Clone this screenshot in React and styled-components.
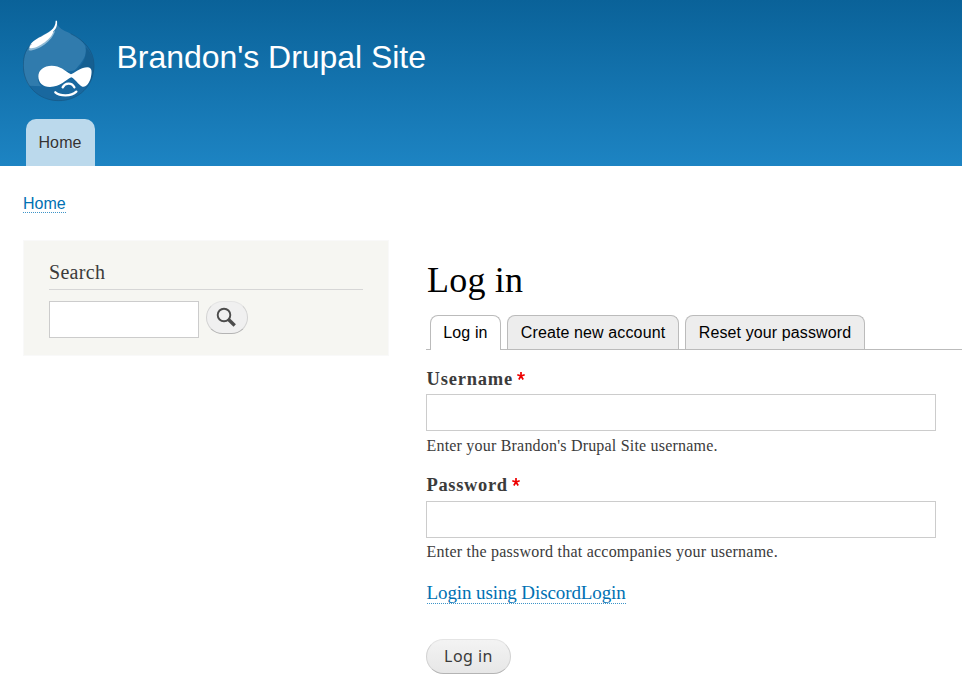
import React from 'react';
import styled, { createGlobalStyle } from 'styled-components';

const serif = '"Liberation Serif", Georgia, serif';
const sans = '"Liberation Sans", Arial, sans-serif';

const GlobalStyle = createGlobalStyle`
  *, *::before, *::after { box-sizing: border-box; }
  body {
    margin: 0;
    background: #fff;
    color: #3b3b3b;
    font-family: ${serif};
    overflow: hidden;
  }
`;

const Page = styled.div`
  width: 962px;
  height: 680px;
  overflow: hidden;
`;

const Header = styled.header`
  height: 166px;
  display: flex;
  flex-direction: column;
  justify-content: space-between;
  background: linear-gradient(to bottom, #0a6299 0%, #1d84c3 100%);
`;

const Branding = styled.div`
  display: flex;
  align-items: flex-start;
  gap: 22px;
  padding: 20px 0 0 23px;
`;

const Logo = styled.svg`
  display: block;
  width: 72px;
  height: 82px;
`;

const SiteName = styled.div`
  margin-top: 18px;
  margin-left: -0.5px;
  font: 32px/38px ${sans};
  letter-spacing: ${p => p.$tracking};
  color: #fff;
`;

const MainMenu = styled.nav`
  display: flex;
  padding-left: 26px;
`;

const MenuTab = styled.a`
  width: 69px;
  height: 47px;
  padding-left: 12.4px;
  border-radius: 10px 10px 0 0;
  background: #bbd9ec;
  color: #333;
  font: 16px/47px ${sans};
  letter-spacing: 0.15px;
  text-shadow: 0 1px #d5e8f4;
`;

const Breadcrumb = styled.nav`
  height: 74px;
  padding: 27px 0 0 23px;
  font: 16px/21px ${sans};
`;

const TextLink = styled.a`
  display: inline-block;
  height: ${p => p.$height};
  color: #0071b3;
  border-bottom: 1px dotted #3d94c8;
  letter-spacing: ${p => p.$tracking || 'normal'};
`;

const Columns = styled.div`
  display: flex;
  align-items: flex-start;
  gap: 37px;
  padding-left: 23px;
`;

const Sidebar = styled.aside`
  flex: none;
  width: 366px;
  height: 116px;
  padding: 19px 25px 0 25px;
  border: 1px solid #f9f9f9;
  background: #f6f6f2;
`;

const BlockTitle = styled.h2`
  margin: 0 0 11px;
  height: 30px;
  border-bottom: 1px solid #d6d6d6;
  font: 20px/24px ${serif};
  letter-spacing: ${p => p.$tracking};
`;

const SearchForm = styled.form`
  display: flex;
  gap: 7px;
`;

const Field = styled.input`
  display: block;
  width: ${p => p.$width};
  height: 37px;
  border: 1px solid #ccc;
  border-radius: 0;
  padding: 4px;
  background: #fff;
  outline: none;
`;

const PillButton = styled.button`
  display: flex;
  align-items: center;
  justify-content: center;
  width: ${p => p.$width};
  height: ${p => p.$height};
  margin: 0;
  padding: 0 0 2px;
  border: 1px solid;
  border-color: #e4e4e4 #d2d2d2 #b4b4b4;
  border-radius: 18px;
  background: ${p => p.$flat ? '#f0f0f0' : 'linear-gradient(#f3f3f3, #e7e7e7)'};
  color: #3a3a3a;
  font: 16px/20px "Noto Sans", "Open Sans", sans-serif;
  letter-spacing: 0.45px;
`;

const SearchIcon = styled.svg`
  display: block;
  width: 20px;
  height: 20px;
  margin-right: 2px;
`;

const Main = styled.main`
  flex: 1;
  padding-top: 18px;
`;

const PageTitle = styled.h1`
  margin: 0 0 13px 1px;
  font: 36px/44px ${serif};
  letter-spacing: ${p => p.$tracking};
  color: #000;
`;

const Tabs = styled.div`
  display: flex;
  gap: 6px;
  height: 35px;
  padding-left: 4px;
  border-bottom: 1px solid #bbb;
`;

const Tab = styled.a`
  width: ${p => p.$width};
  height: ${p => p.$active ? '35px' : '34px'};
  border: 1px solid #bbb;
  border-bottom: 0;
  border-radius: 8px 8px 0 0;
  background: ${p => p.$active ? '#fff' : '#ededed'};
  color: #000;
  font: 16px/33px ${sans};
  letter-spacing: 0.12px;
  text-align: center;
  white-space: nowrap;
`;

const LoginForm = styled.form`
  padding-top: 19px;
`;

const FormItem = styled.div`
  height: ${p => p.$height};
`;

const Label = styled.label`
  display: flex;
  gap: 4px;
  height: ${p => p.$height};
  padding-left: 0.5px;
  font: bold 18.5px/21px ${serif};
`;

const LabelText = styled.span`
  letter-spacing: ${p => p.$tracking};
`;

const Required = styled.svg`
  width: 8px;
  height: 8px;
  margin-top: 3px;
`;

const Description = styled.div`
  margin-top: ${p => p.$gap};
  padding-left: 0.5px;
  font: 16px/20px ${serif};
  letter-spacing: ${p => p.$tracking};
  white-space: nowrap;
`;

const LinkRow = styled.div`
  height: 57px;
  padding-left: 0.5px;
  font: 19px/22px ${serif};
`;

function DropLogo() {
  return (
    <Logo viewBox="69 60 216 246" aria-label="Drupal">
      <path d="M169 63C173 85 189 90 212 101C252 121 282 151 282 196C282 257 237 302 176 302C115 302 70 256 70 196C70 155 90 128 121 109C147 94 169 88 169 63Z" fill="#19689f" />
      <path d="M169 63C173 85 189 90 212 101C236 113 251 125 257 142C262 166 248 184 228 207C219 217 196 214 179 207C158 195 124 196 116 220C110 238 115 252 125 259L87 257C76 241 70 219 70 196C70 155 90 128 121 109C147 94 169 88 169 63Z" fill="#307bad" />
      <path d="M257 142C261 176 246 194 229 211L260 202C278 201 277 215 271 246C286 213 286 166 257 142Z" fill="#155f91" />
      <path d="M86 151C110 154 158 124 165 92L155 99C140 124 111 143 87 145Z" fill="#8fbad5" />
      <path d="M167 62L171 62C173 78 167 87 160 94C158 116 104 153 88 143C89 129 108 116 123 110C146 96 167 88 167 62Z" fill="#fff" />
      <path d="M155 197C180 197 194 211 213 223C231 215 243 202 262 202C278 202 276 218 272 235C267 251 258 263 247 260C234 254 226 237 214 232C198 239 181 261 150 261C128 261 115 248 115 229C115 210 132 197 155 197Z" fill="#fff" />
      <path d="M188 262C195 249 215 246 223 262M166 277C180 289 213 290 229 275" fill="none" stroke="#fff" strokeWidth="7" strokeLinecap="round" />
      <path d="M212 101C252 121 282 151 282 196C282 257 237 302 176 302C115 302 70 256 70 196C70 165 79 146 94 132" fill="none" stroke="#174f78" strokeOpacity=".65" strokeWidth="2.5" />
    </Logo>
  );
}

function RequiredMark() {
  return (
    <Required viewBox="0 0 8 8" aria-label="required">
      <path d="M4 4V0M4 4L.3 2.8M4 4L7.7 2.8M4 4L1.8 7.5M4 4L6.2 7.5" stroke="#e00" strokeWidth="1.7" />
    </Required>
  );
}

export default function App() {
  return (
    <>
      <GlobalStyle />
      <Page>
        <Header>
          <Branding>
            <DropLogo />
            <SiteName $tracking="-0.04px">Brandon's Drupal Site</SiteName>
          </Branding>
          <MainMenu>
            <MenuTab>Home</MenuTab>
          </MainMenu>
        </Header>
        <Breadcrumb>
          <TextLink $height="20px">Home</TextLink>
        </Breadcrumb>
        <Columns>
          <Sidebar>
            <BlockTitle $tracking="0.3px">Search</BlockTitle>
            <SearchForm>
              <Field $width="150px" aria-label="Search" />
              <PillButton type="button" $width="42px" $height="33px" $flat aria-label="Search">
                <SearchIcon viewBox="0 0 20 20" fill="none" stroke="#4c4c4c">
                  <circle cx="8" cy="8" r="6.3" strokeWidth="1.9" />
                  <path d="M12.3 12.3L18.7 18.5" strokeWidth="3.4" />
                </SearchIcon>
              </PillButton>
            </SearchForm>
          </Sidebar>
          <Main>
            <PageTitle $tracking="0.2px">Log in</PageTitle>
            <Tabs>
              <Tab $active $width="71px">Log in</Tab>
              <Tab $width="172px">Create new account</Tab>
              <Tab $width="180px">Reset your password</Tab>
            </Tabs>
            <LoginForm>
              <FormItem $height="106px">
                <Label $height="25px"><LabelText $tracking="0.8px">Username</LabelText><RequiredMark /></Label>
                <Field $width="510px" aria-label="Username" />
                <Description $gap="5px" $tracking="0.2px">Enter your Brandon's Drupal Site username.</Description>
              </FormItem>
              <FormItem $height="107px">
                <Label $height="26px"><LabelText $tracking="0.65px">Password</LabelText><RequiredMark /></Label>
                <Field type="password" $width="510px" aria-label="Password" />
                <Description $gap="4px" $tracking="0.23px">Enter the password that accompanies your username.</Description>
              </FormItem>
              <LinkRow>
                <TextLink $height="22px" $tracking="-0.1px">Login using DiscordLogin</TextLink>
              </LinkRow>
              <PillButton type="button" $width="85px" $height="35px">Log in</PillButton>
            </LoginForm>
          </Main>
        </Columns>
      </Page>
    </>
  );
}
